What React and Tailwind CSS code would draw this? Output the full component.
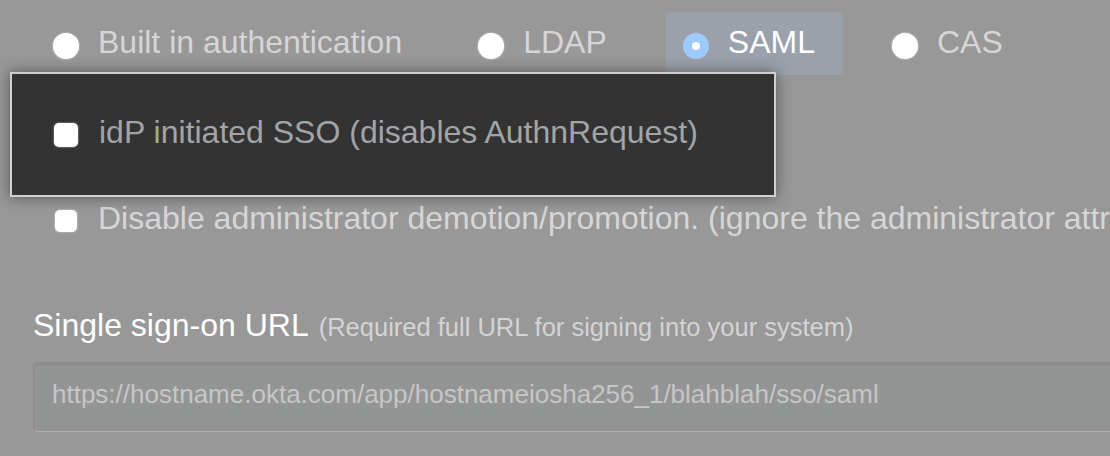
import React from "react";

const font = { fontFamily: '"Liberation Sans", Arial, Helvetica, sans-serif' };

function Radio({ selected }) {
  if (selected) {
    return (
      <span className="flex h-[26px] w-[26px] shrink-0 items-center justify-center rounded-full bg-[#9ecbff] translate-y-[2px]">
        <span className="h-[8px] w-[8px] rounded-full bg-white" />
      </span>
    );
  }
  return (
    <span className="h-[26px] w-[26px] shrink-0 rounded-full bg-white shadow-[0_0_2px_rgba(255,255,255,0.8)] translate-y-[2px]" />
  );
}

function RadioItem({ label, selected, extra = "" }) {
  return (
    <div
      className={
        "flex h-[63px] items-center gap-[19px] rounded-[5px] pl-[17px] " +
        (selected ? "bg-[#9ba1ab] pr-[28px] " : "pr-[22px] ") +
        extra
      }
    >
      <Radio selected={selected} />
      <span
        className={
          "whitespace-nowrap text-[32px] leading-[40px] -translate-y-[2px] " +
          (selected ? "text-white" : "text-[#d6d6d6]")
        }
      >
        {label}
      </span>
    </div>
  );
}

function Checkbox({ size = 22 }) {
  return (
    <span
      className={
        "shrink-0 rounded-[5px] bg-white shadow-[0_0_2px_rgba(255,255,255,0.7)] " +
        (size === 24 ? "h-[24px] w-[24px]" : "h-[22px] w-[22px]")
      }
    />
  );
}

export default function App() {
  return (
    <div
      className="relative h-[456px] w-[1110px] overflow-hidden bg-[#989898]"
      style={font}
    >
      <div className="flex flex-col pt-[12px]">
        {/* radio row */}
        <div className="flex items-center gap-[37px] pl-[36px]">
          <RadioItem label="Built in authentication" />
          <RadioItem label="LDAP" />
          <RadioItem label="SAML" selected />
          <RadioItem label="CAS" extra="-ml-[5px]" />
        </div>

        {/* row hidden under the popup */}
        <div className="h-[125px]" />

        {/* checkbox row */}
        <div className="flex h-[42px] items-center gap-[21px] pl-[55px]">
          <Checkbox />
          <span className="whitespace-nowrap text-[32px] leading-[40px] text-[#d6d6d6] -translate-y-[3px]">
            Disable administrator demotion/promotion. (ignore the administrator attribute)
          </span>
        </div>

        {/* label */}
        <div className="mt-[63px] flex items-baseline gap-[10px] whitespace-nowrap pl-[33px]">
          <span className="text-[32px] leading-[40px] text-white">Single sign-on URL</span>
          <span className="text-[25.5px] leading-[40px] text-[#d4d4d4]">
            (Required full URL for signing into your system)
          </span>
        </div>

        {/* input */}
        <div className="ml-[33px] mt-[15px] flex h-[70px] w-[1100px] items-center rounded-[5px] border border-[#8c8d8c] border-b-[#b0b0b0] bg-[#939594] pl-[18px] shadow-[inset_0_2px_2px_rgba(0,0,0,0.06)]">
          <span className="whitespace-nowrap text-[26px] text-[#c6c6c6] -translate-y-[3px]">
            https://hostname.okta.com/app/hostnameiosha256_1/blahblah/sso/saml
          </span>
        </div>
      </div>

      {/* popup overlay */}
      <div className="absolute left-[10px] top-[72px] flex h-[125px] w-[766px] items-center gap-[21px] border-2 border-[#d0d0d0] bg-[#333333] pl-[42px] shadow-[0_0_14px_rgba(0,0,0,0.45)]">
        <Checkbox size={24} />
        <span className="whitespace-nowrap text-[32px] leading-[40px] text-[#a2a5a7] -translate-y-[3px]">
          idP initiated SSO (disables AuthnRequest)
        </span>
      </div>
    </div>
  );
}
